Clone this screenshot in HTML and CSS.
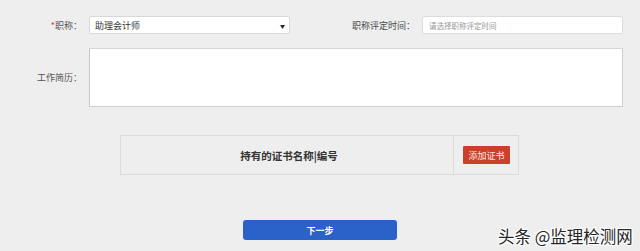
FILE: index.html
```html
<!DOCTYPE html>
<html lang="zh-CN">
<head>
<meta charset="utf-8">
<link rel="stylesheet" href="styles.css">
</head>
<body>
<div class="page">
  <div class="row row-top">
    <label class="label label-first"><span class="req">*</span>职称：</label>
    <div class="select">
      <span>助理会计师</span>
      <span class="arrow">▼</span>
    </div>
    <label class="label label-second">职称评定时间：</label>
    <div class="date-input">请选择职称评定时间</div>
  </div>
  <div class="row row-resume">
    <label class="label label-first">工作简历：</label>
    <div class="textarea"></div>
  </div>
  <div class="cert">
    <div class="cert-title">持有的证书名称|编号</div>
    <div class="cert-action"><button class="btn-add">添加证书</button></div>
  </div>
  <div class="next-wrap">
    <button class="btn-next">下一步</button>
  </div>
  <div class="watermark">头条 @监理检测网</div>
</div>
</body>
</html>
```

FILE: styles.css
```css
html, body {
  margin: 0;
  padding: 0;
  background: #eeeeee;
}
body {
  font-family: "Noto Sans CJK SC", "Noto Sans", sans-serif;
  color: #555;
  width: 640px;
  height: 251px;
  overflow: hidden;
}
.page {
  position: relative;
  width: 640px;
  height: 251px;
  padding-top: 16px;
  box-sizing: border-box;
}
.row {
  display: flex;
  align-items: center;
}
.label {
  font-size: 9px;
  color: #555;
  text-align: right;
  box-sizing: border-box;
}
.label-first {
  width: 82px;
  margin-right: 7px;
}
.req {
  color: #d9362b;
}
.select {
  width: 201px;
  height: 18px;
  box-sizing: border-box;
  background: #fff;
  border: 1px solid #d8d8d8;
  border-radius: 2px;
  display: flex;
  align-items: center;
  justify-content: space-between;
  padding: 0 4px 0 5px;
  font-size: 9px;
  color: #333;
}
.arrow {
  font-size: 5px;
  color: #222;
}
.label-second {
  width: 125px;
  margin-right: 7px;
  color: #4a4a4a;
}
.date-input {
  width: 201px;
  height: 18px;
  box-sizing: border-box;
  background: #fff;
  border: 1px solid #dcdcdc;
  border-radius: 2px;
  display: flex;
  align-items: center;
  padding-left: 6px;
  font-size: 7.5px;
  color: #999;
}
.row-resume {
  margin-top: 14px;
}
.textarea {
  width: 534px;
  height: 59px;
  box-sizing: border-box;
  background: #fff;
  border: 1px solid #cfcfcf;
  border-top-color: #d6d6d6;
  border-left-color: #c8c8c8;
}
.cert {
  margin: 28px 0 0 120px;
  width: 399px;
  height: 40px;
  box-sizing: border-box;
  border: 1px solid #dcdcdc;
  display: flex;
}
.cert-title {
  width: 333px;
  display: flex;
  align-items: center;
  justify-content: center;
  font-size: 10.5px;
  font-weight: bold;
  color: #333;
  border-right: 1px solid #dcdcdc;
  padding-left: 4px;
  box-sizing: border-box;
}
.cert-action {
  flex: 1;
  display: flex;
  align-items: center;
  justify-content: center;
}
.btn-add {
  width: 47px;
  height: 18px;
  border: none;
  border-radius: 1px;
  background: #c9412a;
  color: #fbe7e2;
  font-family: inherit;
  font-size: 9px;
  padding: 0;
  margin-left: 1px;
}
.next-wrap {
  margin-top: 45px;
  padding-left: 243px;
}
.btn-next {
  width: 154px;
  height: 20px;
  border: none;
  border-radius: 3px;
  background: #2b62c9;
  color: #fff;
  font-family: inherit;
  font-size: 9px;
  font-weight: bold;
  padding: 0;
  display: block;
}
.watermark {
  position: absolute;
  left: 498px;
  top: 224px;
  font-size: 16.5px;
  color: #262626;
  text-shadow: 1px 1px 0 #fff, -1px -1px 0 #fff, 1px -1px 0 #fff, -1px 1px 0 #fff;
  white-space: nowrap;
}
```
